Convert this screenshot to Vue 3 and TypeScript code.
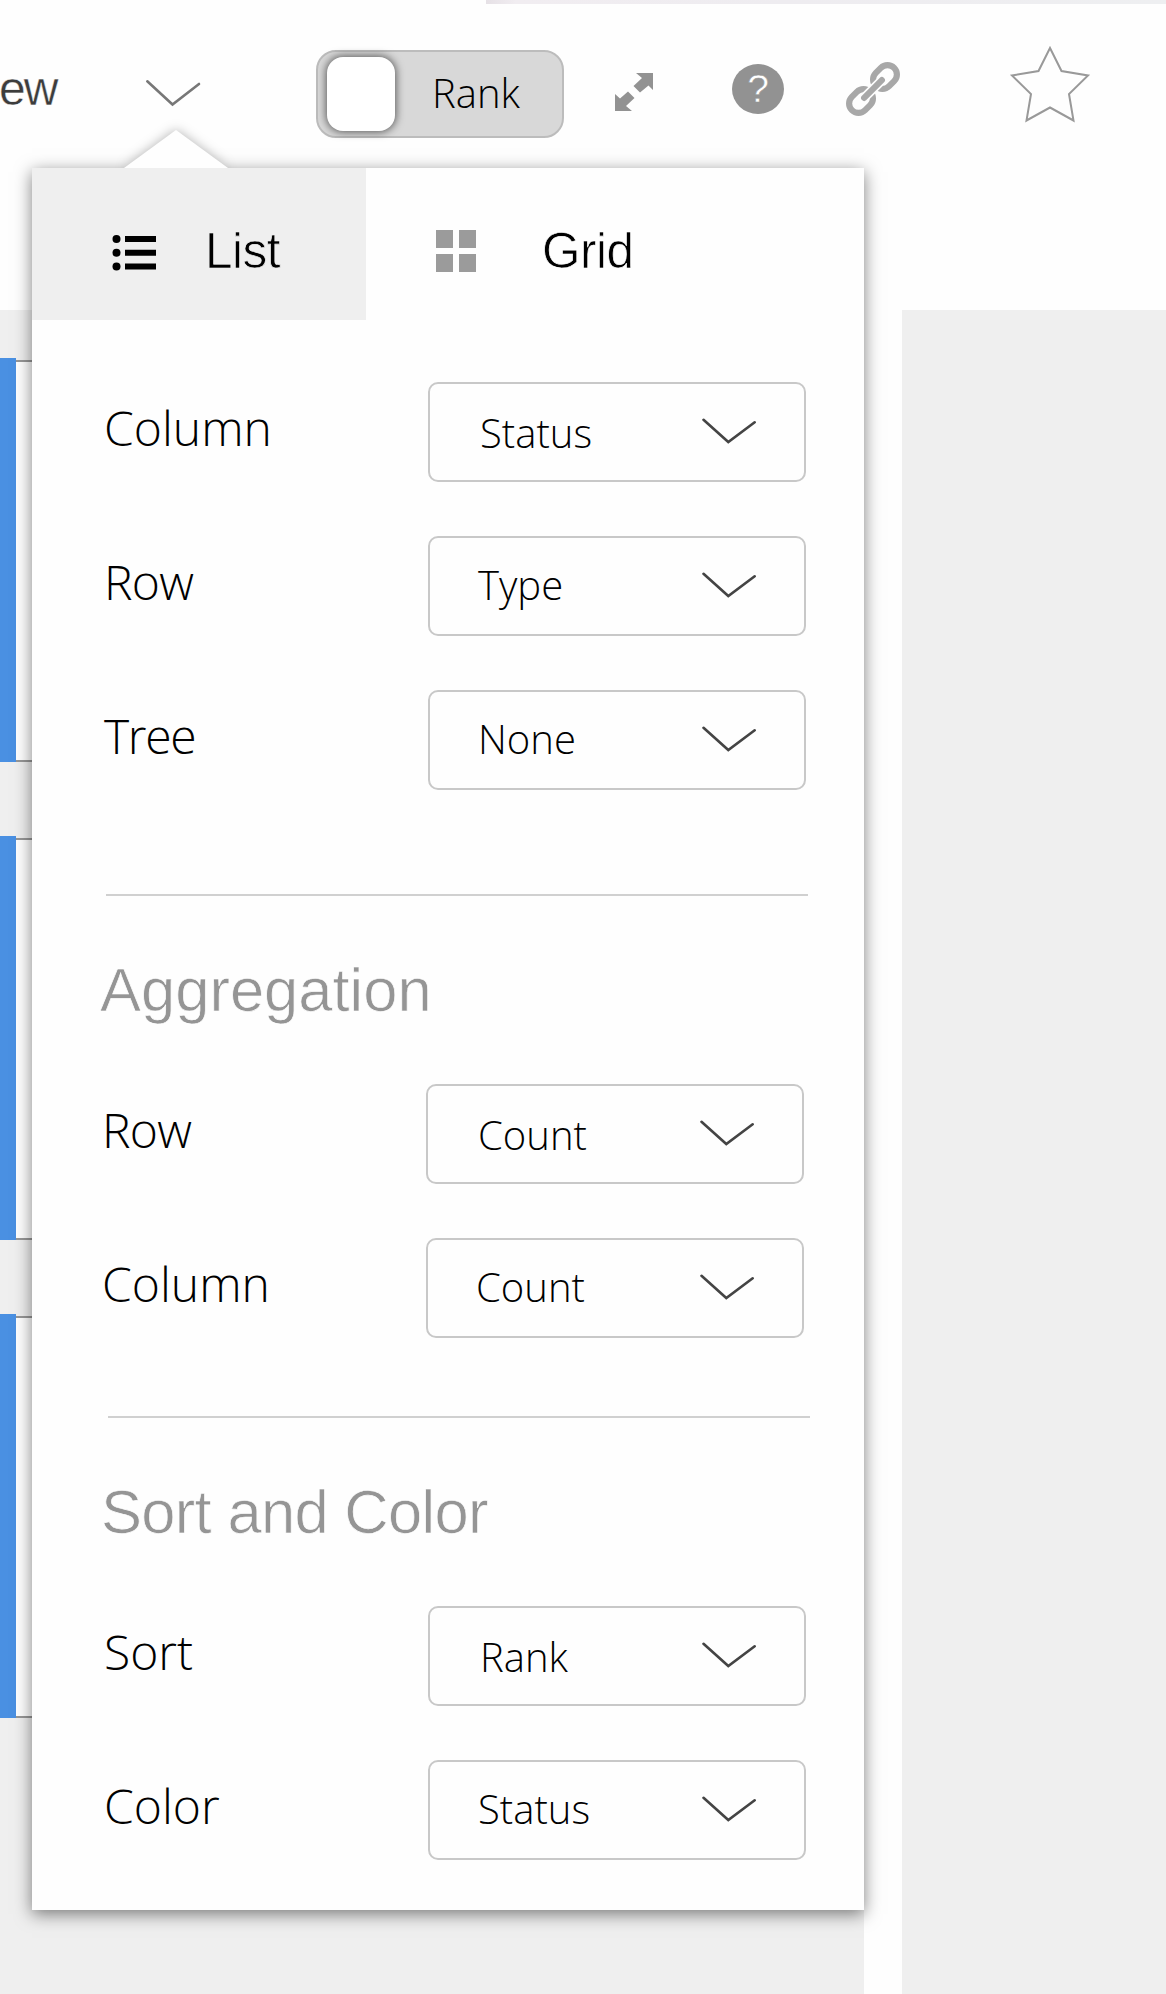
<script setup lang="ts">
interface Field { label: string; value: string; vx: number; vy: number; tight?: string }
interface Section { id: string; title?: string; fields: Field[] }

// vx/vy are optical nudges of the value, in pixels; tight names a tracking class of the label
const sections: Section[] = [
  { id: 'layout', fields: [
    { label: 'Column', value: 'Status', vx: 0, vy: 1 },
    { label: 'Row', value: 'Type', vx: -2, vy: -1, tight: 'snug' },
    { label: 'Tree', value: 'None', vx: -2, vy: -1, tight: 'tight' },
  ] },
  { id: 'aggregation', title: 'Aggregation', fields: [
    { label: 'Row', value: 'Count', vx: 0, vy: 1, tight: 'snug' },
    { label: 'Column', value: 'Count', vx: -2, vy: -1 },
  ] },
  { id: 'sort', title: 'Sort and Color', fields: [
    { label: 'Sort', value: 'Rank', vx: 0, vy: 1 },
    { label: 'Color', value: 'Status', vx: -2, vy: -1 },
  ] },
]
const cards = [1, 2, 3]
</script>

<template>
  <div class="page">
    <header class="toolbar">
      <div class="strip"></div>
      <span class="view">ew</span>
      <svg class="view-chevron" width="60" height="30" viewBox="0 0 60 30"><path d="M4.300 3.300 L29.500 26.500 L56 6" /></svg>
      <div class="toggle"><span class="knob"></span><span class="toggle-label">Rank</span></div>
      <svg class="expand" width="40" height="44" viewBox="614 72 40 44"><path d="M636 73H653V90L648.500 85.500L640 92.500L633.500 86L642 78ZM615 111V94L620 98.500L628 91.500L634.500 98L626 106L632 111Z" /></svg>
      <span class="help">?</span>
      <svg class="link" width="56" height="56" viewBox="845 61 56 56">
        <g transform="rotate(-45 873 89)"><rect x="843.1" y="79.6" width="25.9" height="18.800" rx="9.4" /><rect x="877" y="79.6" width="25.900" height="18.800" rx="9.4" /><path class="gap" d="M860 89H886" /><path d="M860.500 89H885.500" /></g>
      </svg>
      <svg class="star" width="84" height="80" viewBox="1008 44 84 80"><path d="M1050 48L1061.500 71L1088 75.500L1069 94L1073.500 120.500L1050 107.500L1026.500 120.500L1031 94L1012 75.500L1038.500 71Z" /></svg>
    </header>
    <main class="board">
      <section class="lane"><div v-for="c in cards" :key="c" class="card"></div></section>
      <aside class="side"></aside>
    </main>

    <div class="popover">
      <svg class="pointer" width="144" height="68" viewBox="0 0 144 68"><path d="M20 68 L72 30 L124 68Z" /></svg>
      <nav class="tabs">
        <button class="tab active">
          <svg width="46" height="42" viewBox="0 0 46 42"><circle cx="4.500" cy="6" r="4" /><circle cx="4.500" cy="19.700" r="4" /><circle cx="4.500" cy="33.400" r="4" /><path d="M13 3H44V9H13ZM13 16.700H44V22.700H13ZM13 30.400H44V36.400H13Z" /></svg>
          <span>List</span>
        </button>
        <button class="tab grid">
          <svg width="41" height="42" viewBox="0 0 41 42"><path d="M0 0H17V18H0ZM23 0H40V18H23ZM0 24H17V42H0ZM23 24H40V42H23Z" /></svg>
          <span>Grid</span>
        </button>
      </nav>
      <section v-for="s in sections" :key="s.id" class="section" :class="s.id">
        <h2 v-if="s.title">{{ s.title }}</h2>
        <div v-for="f in s.fields" :key="f.label" class="field">
          <label :class="f.tight">{{ f.label }}</label>
          <div class="select">
            <span :style="{ transform: `translate(${f.vx}px, ${f.vy}px)` }">{{ f.value }}</span>
            <svg width="56" height="30" viewBox="0 0 56 30"><path d="M1.500 1.800 L26.300 24 L52.700 4.300" /></svg>
          </div>
        </div>
      </section>
    </div>
  </div>
</template>

<style>
body { margin: 0; background: #fff; }
</style>
<style scoped>
* { box-sizing: border-box; }
.page { position: relative; width: 1166px; height: 1994px; overflow: hidden; background: #fefefe; font-family: "Open Sans", "Noto Sans", sans-serif; font-weight: 300; color: #000; }
.toolbar { position: relative; height: 310px; display: flex; align-items: flex-start; }
.strip { position: absolute; top: 0; left: 486px; right: 0; height: 4px; background: linear-gradient(90deg, #e6e1e6, #f1edf1 30px, #eeecf0 300px, #eeeff1); }
svg { display: block; flex: none; }
.view { font: 48px/60px "Liberation Sans", Arial, sans-serif; letter-spacing: -2px; color: #3c3c3c; width: 59px; margin: 59px 0 0 -1px; -webkit-text-stroke: .4px #fefefe; }
.view-chevron { margin: 78px 0 0 85px; fill: none; stroke: #777; stroke-width: 2.6; stroke-linecap: round; }
.toggle { display: flex; align-items: center; width: 248px; height: 88px; margin: 50px 0 0 113px; border: 2px solid #bcbcbc; border-radius: 20px; background: #d8d8d8; padding-left: 9px; }
.knob { width: 68px; height: 74px; border-radius: 16px; background: #fff; box-shadow: 0 0 8px 1px rgba(0,0,0,.6); }
.toggle-label { margin: -2px 0 0 37px; font-size: 40px; line-height: 56px; }
.expand { margin: 72px 0 0 50px; fill: #929292; }
.help { width: 52px; height: 50px; margin: 64px 0 0 78px; border-radius: 50%; background: #929292; color: #fff; font: 39px/50px "Liberation Sans", Arial, sans-serif; text-align: center; -webkit-text-stroke: .5px #929292; }
.link { margin: 61px 0 0 61px; fill: none; stroke: #a8a8a8; stroke-width: 6.2; stroke-linecap: round; }
.link .gap { stroke: #fefefe; stroke-width: 9.4; }
.star { margin: 44px 0 0 107px; fill: none; stroke: #999; stroke-width: 2; }
.board { display: flex; height: 1684px; gap: 38px; }
.lane { width: 864px; background: #efefef; padding-top: 48px; display: flex; flex-direction: column; gap: 74px; }
.card { height: 404px; width: 700px; border-left: 16px solid #4a90e2; background: linear-gradient(#979797, #979797) 0 2px / 100% 2px no-repeat, linear-gradient(#979797, #979797) 0 100% / 100% 2px no-repeat, linear-gradient(#efefef, #efefef) 0 0 / 100% 2px no-repeat, #fff; }
.side { flex: 1; background: #efefef; }
.popover { position: absolute; left: 32px; top: 168px; width: 832px; height: 1742px; background: #fefefe; box-shadow: 0 4px 16px rgba(0,0,0,.5); }
.pointer { position: absolute; left: 72px; top: -68px; overflow: hidden; }
.pointer path { fill: #fefefe; filter: drop-shadow(0 0 6px rgba(0,0,0,.3)); }
.tabs { display: flex; position: relative; height: 152px; }
.tab { display: flex; align-items: flex-start; border: 0; margin: 0; background: transparent; padding: 62px 0 0 76px; font: 49.5px/60px "Liberation Sans", Arial, sans-serif; letter-spacing: -.5px; color: #000; }
.tab span { -webkit-text-stroke: .7px #fefefe; }
.tab svg { margin-top: 3px; }
.tab.active { width: 334px; padding-left: 80px; background: #efefef; }
.tab.active span { margin: -9px 0 0 47px; -webkit-text-stroke-color: #efefef; }
.tab.grid { padding-left: 70px; }
.tab.grid svg { fill: #9b9b9b; margin-top: 0; }
.tab.grid span { margin: -9px 0 0 65px; }
.field { display: flex; justify-content: space-between; height: 100px; width: 702px; margin-bottom: 54px; }
.field:last-child { margin-bottom: 0; }
label { font-size: 48px; line-height: 64px; margin-top: 14px; }
label.snug { letter-spacing: -.7px; }
label.tight { letter-spacing: -1.3px; }
.select { display: flex; width: 378px; height: 100px; border: 2px solid #c8c8c8; border-radius: 10px; justify-content: space-between; padding: 0 46px 0 50px; margin-left: auto; }
.select span { font-size: 40px; line-height: 56px; margin-top: 20px; }
.select svg { margin-top: 34px; fill: none; stroke: #444; stroke-width: 2.6; stroke-linecap: round; }
.section { margin-left: 72px; }
.layout { padding-top: 62px; height: 574px; }
.aggregation { margin-left: 70px; height: 522px; }
.section + .section::before { content: ""; display: block; height: 2px; width: 702px; margin-left: 4px; background: #d0d0d0; }
h2 { margin: 60px 0 0 -2px; height: 128px; font: 61.5px/68px "Liberation Sans", Arial, sans-serif; color: #959595; -webkit-text-stroke: .7px #fefefe; }
.aggregation h2 { margin-left: -2px; }
.sort h2 { margin-left: -3px; letter-spacing: -.7px; }
</style>
